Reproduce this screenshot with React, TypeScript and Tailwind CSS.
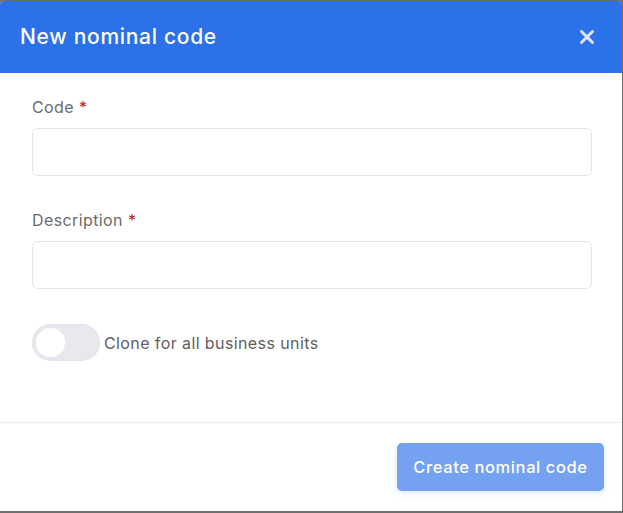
import { X } from 'lucide-react'

export default function App() {
  return (
    <div className="h-[513px] w-[623px] bg-[#6f6f6f] pt-px pb-[2px] font-['Inter',sans-serif]">
      <div className="flex h-full w-[622px] flex-col overflow-hidden rounded-t-[4px] bg-white">
        <header className="flex h-[72px] shrink-0 items-center justify-between bg-[#2b71e7] pr-[24px] pl-[20px]">
          <h2 className="text-[21px] font-medium tracking-[0.7px] text-white">New nominal code</h2>
          <X className="h-[22px] w-[22px] text-[#dbe6fb]" strokeWidth={3.2} />
        </header>

        <div className="flex flex-1 flex-col px-[32px] pt-[22px] tracking-[0.4px]">
          <label className="text-[16px] text-[#6b6b6b]">
            Code <span className="text-[#b3261e]">*</span>
          </label>
          <input className="mt-[9px] h-[48px] w-[560px] rounded-[6px] border border-[#e3e3ec] outline-none" />

          <label className="mt-[32px] text-[16px] text-[#6b6b6b]">
            Description <span className="text-[#b3261e]">*</span>
          </label>
          <input className="mt-[9px] h-[48px] w-[560px] rounded-[6px] border border-[#e3e3ec] outline-none" />

          <div className="mt-[35px] flex items-center gap-[4px]">
            <div className="flex h-[37px] w-[68px] items-center rounded-full border-2 border-[#e2e5ee] bg-[#e8e9ee] px-[2px]">
              <div className="h-[29px] w-[29px] rounded-full bg-white" />
            </div>
            <span className="text-[16px] text-[#606060]">Clone for all business units</span>
          </div>
        </div>

        <footer className="flex h-[89px] shrink-0 items-start justify-end border-t border-[#ececf0] pt-[20px] pr-[18px]">
          <button className="h-[48px] w-[207px] rounded-[5px] bg-[#74a2f0] text-[16.5px] font-medium tracking-[0.6px] text-white shadow-[0_2px_6px_rgba(116,162,240,0.25)]">
            Create nominal code
          </button>
        </footer>
      </div>
    </div>
  )
}
